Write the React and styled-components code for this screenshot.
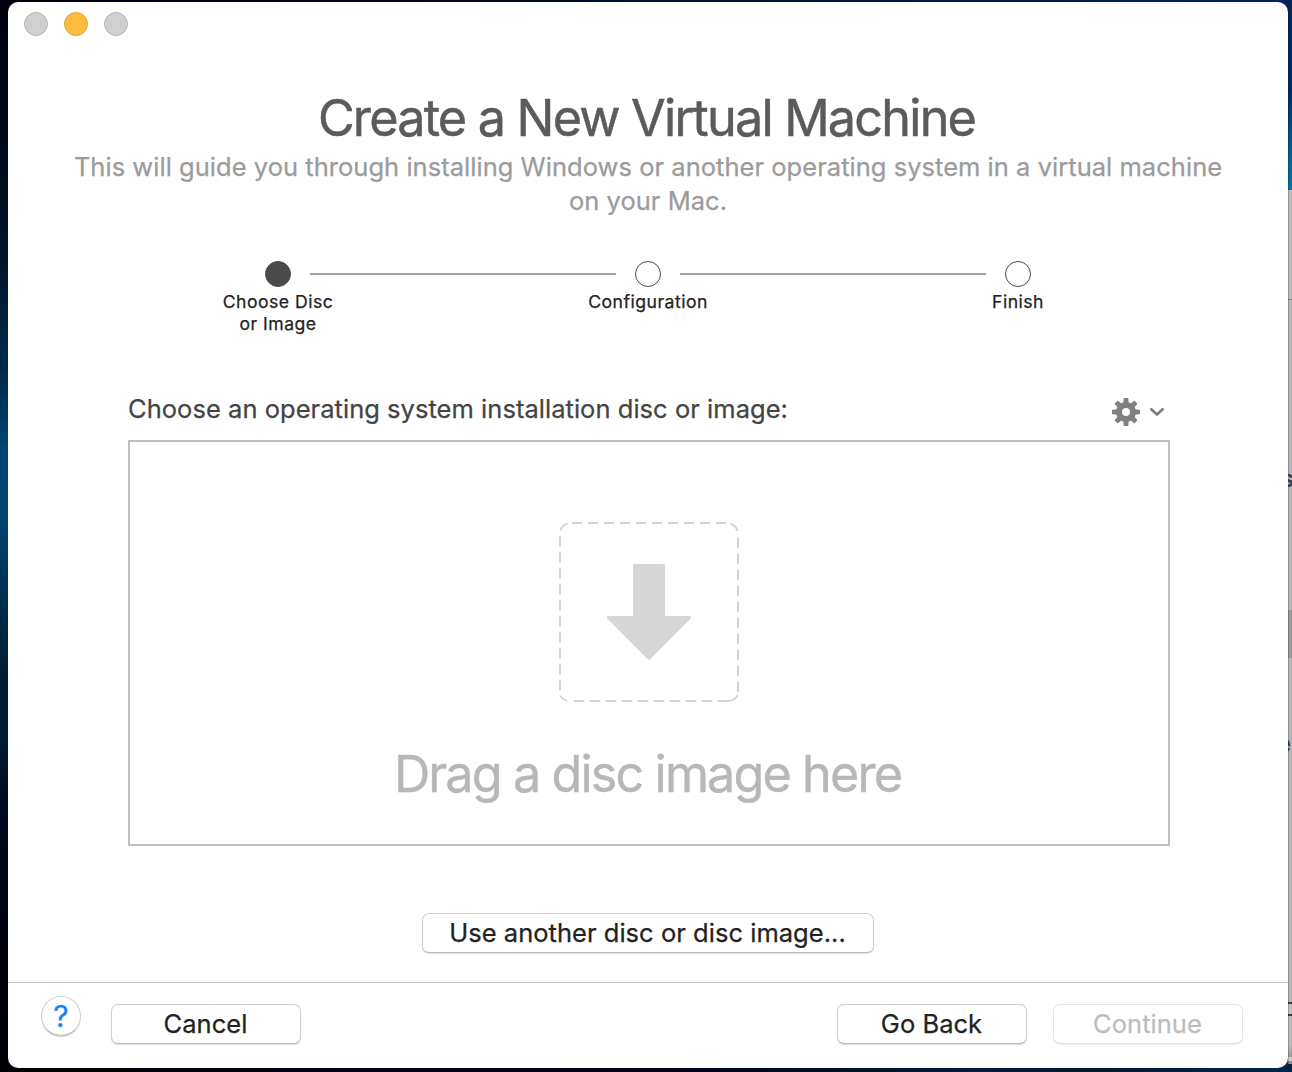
import React from "react";
import styled, { createGlobalStyle } from "styled-components";

const GlobalStyle = createGlobalStyle`
  * { box-sizing: border-box; }
  body { margin: 0; overflow: hidden; }
`;

const Desktop = styled.div`
  width: 1292px;
  height: 1072px;
  display: grid;
  grid-template-columns: 8px 1280px 4px;
  font-family: Inter, "Liberation Sans", sans-serif;
  font-weight: 400;
  -webkit-text-stroke-width: 0.25px;
  background: linear-gradient(90deg, #000010 0%, #000418 20%, #00123a 50%, #002a66 100%);
`;

const LeftWallpaper = styled.div`
  background: linear-gradient(180deg, #00000f 0, #000818 120px, #001428 260px, #002b4e 370px,
    #004573 450px, #00436f 520px, #002f52 600px, #001c30 670px, #001a30 740px, #000a22 800px,
    #000210 920px, #000004 1072px);
`;

const Center = styled.div`
  display: flex;
  flex-direction: column;
  padding: 2px 0 4px;
  background: linear-gradient(90deg, #00000e 0%, #000620 30%, #00123a 60%, #00245c 100%) top / 100% 50% no-repeat,
    linear-gradient(90deg, #000004 0%, #00041a 55%, #001c38 75%, #001a30 85%, #002548 100%) bottom / 100% 50% no-repeat;
`;

const Strip = styled.div`
  display: flex;
  flex-direction: column;
  overflow: hidden;
`;

const StripPart = styled.div`
  flex: none;
  height: ${(p) => p.$h}px;
  background: ${(p) => p.$bg};
  box-shadow: inset 1px 0 0 rgba(0, 0, 0, 0.22);
  overflow: hidden;
  font-size: 24px;
  font-weight: 500;
  line-height: ${(p) => p.$h}px;
  color: #333a48;
  text-indent: ${(p) => p.$indent || 0}px;
`;

const Window = styled.main`
  height: 1066px;
  display: flex;
  flex-direction: column;
  background: #fff;
  border-radius: 10px;
  overflow: hidden;
`;

const TitleBar = styled.div`
  height: 86px;
  padding: 10px 16px;
  display: flex;
  gap: 16px;
`;

const Light = styled.span`
  width: 24px;
  height: 24px;
  border-radius: 50%;
  background: ${(p) => (p.$active ? "#fdbc40" : "#d0d0d0")};
  border: 1px solid ${(p) => (p.$active ? "#e0a030" : "#b4b4b4")};
`;

const Title = styled.h1`
  margin: 0;
  height: 62px;
  padding-right: 3px;
  line-height: 60px;
  font-size: 50.3px;
  font-weight: 400;
  letter-spacing: -1.78px;
  -webkit-text-stroke-width: 0.5px;
  text-align: center;
  white-space: nowrap;
  color: #5b5b5b;
`;

const Subtitle = styled.p`
  margin: 0;
  text-align: center;
  font-size: 25.5px;
  line-height: 34px;
  letter-spacing: 0.03px;
  white-space: nowrap;
  color: #9b9b9b;
`;

const Steps = styled.ol`
  list-style: none;
  margin: 0;
  padding: 43px 0 0 180px;
  height: 171px;
  display: flex;
`;

const Step = styled.li`
  width: 180px;
  display: flex;
  flex-direction: column;
  align-items: center;
`;

const StepDot = styled.span`
  width: 26px;
  height: 26px;
  border-radius: 50%;
  border: 1.5px solid #4a4a4a;
  background: ${(p) => (p.$current ? "#4a4a4a" : "#fff")};
`;

const StepLabel = styled.span`
  margin-top: 4px;
  text-align: center;
  font-size: 17.6px;
  line-height: 22px;
  letter-spacing: 0.5px;
  white-space: pre-line;
  color: #222;
`;

const StepLine = styled.li`
  flex: none;
  width: 306px;
  height: 2px;
  margin: 12px -58px 0;
  background: #a0a0a0;
`;

const Chooser = styled.section`
  width: 1042px;
  margin-left: 120px;
`;

const ChooserHead = styled.div`
  height: 51px;
  display: flex;
  justify-content: space-between;
  align-items: flex-start;
  padding-right: 5px;
`;

const ChooserLabel = styled.span`
  height: 40px;
  line-height: 40px;
  font-size: 25.5px;
  letter-spacing: 0.035px;
  white-space: nowrap;
  color: #444;
`;

const GearButton = styled.button`
  height: 40px;
  margin-top: 3px;
  padding: 0;
  border: 0;
  background: none;
  display: flex;
  align-items: center;
  gap: 9px;
`;

const DropZone = styled.div`
  height: 406px;
  border: 2px solid #c0c0c0;
  display: flex;
  flex-direction: column;
  align-items: center;
  padding-top: 80px;
`;

const DropText = styled.span`
  margin-top: 42px;
  padding-right: 3px;
  line-height: 60px;
  font-size: 50.3px;
  letter-spacing: -1.88px;
  -webkit-text-stroke-width: 0.4px;
  white-space: nowrap;
  color: #b7b7b7;
`;

const Button = styled.button`
  width: ${(p) => p.$w}px;
  height: 40px;
  padding: 0;
  border: 1px solid ${(p) => (p.disabled ? "#e6e6e6" : "#cfcfcf")};
  border-bottom-color: ${(p) => (p.disabled ? "#dedede" : "#b8b8b8")};
  border-radius: 7px;
  background: #fff;
  box-shadow: 0 1px 1px rgba(0, 0, 0, ${(p) => (p.disabled ? 0.05 : 0.14)});
  font-family: inherit;
  font-size: 25.5px;
  font-weight: 400;
  line-height: 38px;
  letter-spacing: 0.03px;
  padding-right: 1px;
  white-space: nowrap;
  color: ${(p) => (p.disabled ? "#bdbdbd" : "#222")};
`;

const AlternateRow = styled.div`
  flex: 1;
  padding-top: 67px;
  display: flex;
  justify-content: center;
  align-items: flex-start;
`;

const Footer = styled.footer`
  height: 86px;
  border-top: 1px solid #c8c8c8;
  padding: 21px 45px 0 33px;
  display: flex;
  align-items: flex-start;
`;

const HelpButton = styled.button`
  width: 40px;
  height: 40px;
  margin: -8px 30px 0 0;
  padding: 0;
  border: 1px solid #d2d2d2;
  border-bottom-color: #b8b8b8;
  border-radius: 50%;
  background: #fff;
  box-shadow: 0 1px 1px rgba(0, 0, 0, 0.15);
  font-family: inherit;
  font-size: 30px;
  font-weight: 400;
  line-height: 38px;
  color: #157efb;
`;

const Actions = styled.div`
  margin-left: auto;
  display: flex;
  gap: 26px;
`;

function GearIcon() {
  return (
    <svg width="28" height="28" viewBox="-14 -14 28 28">
      <g fill="#808080">
        {[0, 45, 90, 135, 180, 225, 270, 315].map((a) => (
          <path key={a} transform={`rotate(${a})`} d="M-2.9 -7 L-2.3 -13.4 Q-2.2 -14 -1.6 -14 H1.6 Q2.2 -14 2.3 -13.4 L2.9 -7Z" />
        ))}
      </g>
      <circle r="7" fill="none" stroke="#808080" strokeWidth="6" />
    </svg>
  );
}

function ChevronIcon() {
  return (
    <svg width="16" height="12" viewBox="0 0 16 12">
      <path d="M2.3 3.2 L8 8.6 L13.7 3.2" fill="none" stroke="#808080" strokeWidth="2.8" strokeLinecap="round" strokeLinejoin="round" />
    </svg>
  );
}

function DropIcon() {
  return (
    <svg width="180" height="180" viewBox="0 0 180 180">
      <g fill="none" stroke="#d6d6d6" strokeWidth="2">
        <path strokeDasharray="10.3 5.7" d="M13 1 H168 M179 15.5 V170 M15 179 H170 M1 14 V169" />
        <path d="M1.3 9 Q3 3 8.5 1.7 M171.5 1.7 Q177 3.5 178.7 9 M1.3 173.5 Q3 177.8 8.5 178.7 M169 179 Q176.5 178.5 178.7 173" />
      </g>
      <path
        fill="#d6d6d6"
        d="M75.5 42 H104.500 Q106 42 106 43.500 V94 H130.500 Q133 94.500 131.500 96.800 L91.300 137.200 Q90 138.300 88.700 137.200 L48.500 96.800 Q47 94.500 49.500 94 H74 V43.500 Q74 42 75.500 42Z"
      />
    </svg>
  );
}

const steps = ["Choose Disc\nor Image", "Configuration", "Finish"];

const strip = [
  { h: 190, bg: "linear-gradient(180deg, #00265c 0, #002a68 90px, #004d84 130px, #0078a8 190px)" },
  { h: 109, bg: "#bcbcbc" },
  { h: 1, bg: "#868686" },
  { h: 164, bg: "#b8b8b8" },
  { h: 30, bg: "#b8b8b8", text: "s", indent: -7 },
  { h: 116, bg: "#b8b8b8" },
  { h: 48, bg: "#9a9a9a" },
  { h: 72, bg: "#b8b8b8" },
  { h: 28, bg: "#b8b8b8", text: "e", indent: -11 },
  { h: 244, bg: "#b8b8b8" },
  { h: 2, bg: "#3a3a3a" },
  { h: 10, bg: "#c2c2c2" },
  { h: 2, bg: "#3a3a3a" },
  { h: 41, bg: "linear-gradient(180deg, #bcbcbc 70%, #9c9c9c 100%)" },
  { h: 7, bg: "linear-gradient(180deg, #d0d0d0 0 4px, #909090 4px)" },
  { h: 8, bg: "#002548" },
];

export default function App() {
  return (
    <>
      <GlobalStyle />
      <Desktop>
        <LeftWallpaper />
        <Center>
          <Window>
            <TitleBar>
              <Light />
              <Light $active />
              <Light />
            </TitleBar>
            <Title>Create a New Virtual Machine</Title>
            <Subtitle>
              This will guide you through installing Windows or another operating system in a virtual machine
              <br />
              on your Mac.
            </Subtitle>
            <Steps>
              {steps.map((label, i) => (
                <React.Fragment key={label}>
                  {i > 0 && <StepLine />}
                  <Step>
                    <StepDot $current={i === 0} />
                    <StepLabel>{label}</StepLabel>
                  </Step>
                </React.Fragment>
              ))}
            </Steps>
            <Chooser>
              <ChooserHead>
                <ChooserLabel>Choose an operating system installation disc or image:</ChooserLabel>
                <GearButton aria-label="Options">
                  <GearIcon />
                  <ChevronIcon />
                </GearButton>
              </ChooserHead>
              <DropZone>
                <DropIcon />
                <DropText>Drag a disc image here</DropText>
              </DropZone>
            </Chooser>
            <AlternateRow>
              <Button $w={452}>Use another disc or disc image...</Button>
            </AlternateRow>
            <Footer>
              <HelpButton>?</HelpButton>
              <Button $w={190}>Cancel</Button>
              <Actions>
                <Button $w={190}>Go Back</Button>
                <Button $w={190} disabled>
                  Continue
                </Button>
              </Actions>
            </Footer>
          </Window>
        </Center>
        <Strip>
          {strip.map((part, i) => (
            <StripPart key={i} $h={part.h} $bg={part.bg} $indent={part.indent}>
              {part.text}
            </StripPart>
          ))}
        </Strip>
      </Desktop>
    </>
  );
}
